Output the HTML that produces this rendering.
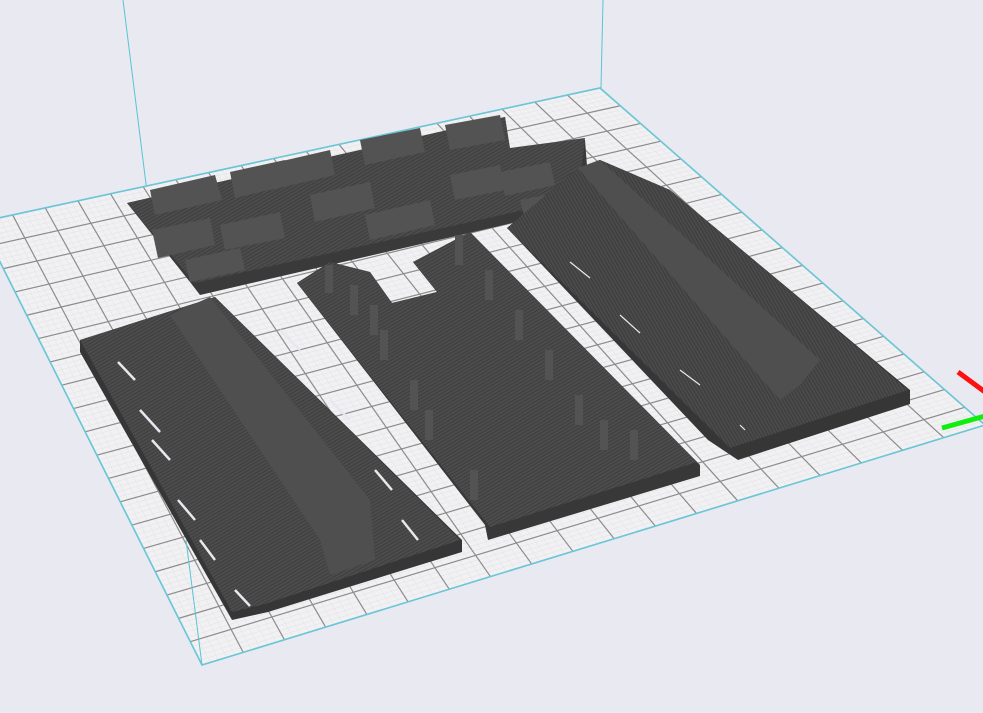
<!DOCTYPE html>
<html><head><style>
html,body{margin:0;padding:0;background:#e9e9f1;width:983px;height:713px;overflow:hidden}
svg{display:block}
</style></head><body>
<svg id="s" width="983" height="713" viewBox="0 0 983 713" xmlns="http://www.w3.org/2000/svg">
<defs>
<pattern id="st" width="3" height="3" patternUnits="userSpaceOnUse" patternTransform="rotate(60)">
<rect width="3" height="3" fill="#4c4c4c"/><rect width="1" height="3" fill="#3e3e3e"/>
</pattern>
<pattern id="st2" width="3" height="3" patternUnits="userSpaceOnUse" patternTransform="rotate(-30)">
<rect width="3" height="3" fill="#4a4a4a"/><rect width="1" height="3" fill="#3c3c3c"/>
</pattern>
</defs>
<rect width="983" height="713" fill="#e9e9f1"/>
<line x1="123" y1="0" x2="163" y2="320" stroke="#5cc3d6" stroke-width="1"/>
<line x1="603" y1="0" x2="601" y2="88" stroke="#5cc3d6" stroke-width="1"/>
<polygon points="-20,222 600,88 985,425 202,665" fill="#f1f1f3" stroke="#6cc6d6" stroke-width="1.5"/>
<g id="fine" stroke="#e2e2e6" stroke-width="0.5"></g>
<g id="grid" stroke="#8c8c8c" stroke-width="1.2"></g>
<polygon points="-20,222 600,88 985,425 202,665" fill="none" stroke="#6cc6d6" stroke-width="1.5"/>
<line x1="202" y1="665" x2="186" y2="540" stroke="#5cc3d6" stroke-width="1"/>

<!-- top strip -->
<polygon points="127,203 505,117 510,150 585,140 590,205 200,295 190,282" fill="#3a3a3a"/>
<polygon points="127,203 505,117 510,148 585,138 578,198 195,283" fill="url(#st)"/>
<g fill="#535353">
<polygon points="150,190 215,175 222,200 155,215"/><polygon points="230,172 285,160 290,185 235,198"/>
<polygon points="265,165 330,150 335,175 270,190"/><polygon points="360,140 420,128 425,152 365,165"/>
<polygon points="445,125 500,115 505,140 450,150"/><polygon points="152,230 210,218 215,245 158,258"/>
<polygon points="185,260 240,248 245,270 190,282"/><polygon points="220,225 280,212 285,238 225,250"/>
<polygon points="310,195 370,182 375,208 315,222"/><polygon points="365,215 430,200 435,225 370,240"/>
<polygon points="450,175 500,165 505,190 455,200"/><polygon points="500,172 550,162 555,185 505,196"/>
<polygon points="520,200 560,192 565,210 525,220"/>
</g>
<!-- left part -->
<polygon points="80,340 215,297 462,540 462,552 268,612 232,620 80,352" fill="#363636"/>
<polygon points="80,340 215,297 460,540 265,604 232,612" fill="url(#st)"/>
<polygon points="170,315 210,297 370,500 375,560 330,575 320,540" fill="#4f4f4f"/>
<g stroke="#e8e8ee" stroke-width="2.5">
<line x1="118" y1="362" x2="135" y2="380"/><line x1="140" y1="410" x2="160" y2="432"/>
<line x1="152" y1="440" x2="170" y2="460"/><line x1="178" y1="500" x2="195" y2="520"/>
<line x1="200" y1="540" x2="215" y2="560"/><line x1="235" y1="590" x2="250" y2="606"/>
<line x1="280" y1="330" x2="300" y2="350"/><line x1="330" y1="400" x2="350" y2="420"/>
<line x1="375" y1="470" x2="392" y2="490"/><line x1="402" y1="520" x2="418" y2="540"/>
</g>
<!-- middle part -->
<polygon points="297,283 330,262 370,272 392,303 437,292 413,262 470,232 700,465 700,476 488,540 485,525" fill="#383838"/>
<polygon points="297,283 330,262 370,272 392,303 437,292 413,262 470,232 697,462 490,527" fill="url(#st)"/>
<g fill="#535353">
<rect x="325" y="265" width="8" height="28"/><rect x="350" y="285" width="8" height="30"/>
<rect x="370" y="305" width="8" height="30"/><rect x="380" y="330" width="8" height="30"/>
<rect x="410" y="380" width="8" height="30"/><rect x="425" y="410" width="8" height="30"/>
<rect x="455" y="235" width="8" height="30"/><rect x="485" y="270" width="8" height="30"/>
<rect x="515" y="310" width="8" height="30"/><rect x="545" y="350" width="8" height="30"/>
<rect x="575" y="395" width="8" height="30"/><rect x="600" y="420" width="8" height="30"/>
<rect x="630" y="430" width="8" height="30"/><rect x="470" y="470" width="8" height="30"/>
</g>
<!-- right part -->
<polygon points="507,228 578,168 600,160 670,190 910,390 910,404 738,460 708,440" fill="#363636"/>
<polygon points="507,228 578,168 600,160 670,190 908,390 730,448" fill="url(#st2)"/>
<polygon points="578,168 600,160 820,360 800,385 780,400" fill="#4f4f4f"/>
<g stroke="#e8e8ee" stroke-width="1.2">
<line x1="570" y1="262" x2="590" y2="278"/><line x1="620" y1="315" x2="640" y2="333"/>
<line x1="680" y1="370" x2="700" y2="385"/><line x1="740" y1="425" x2="745" y2="430"/>
</g>
<!-- axes -->
<line x1="958" y1="372" x2="985" y2="392" stroke="#ff1010" stroke-width="5"/>
<line x1="942" y1="428" x2="985" y2="416" stroke="#10ee10" stroke-width="5"/>
</svg>
<script>
(function(){
var TL=[-20,222],TR=[600,88],BR=[985,425],BL=[202,665];
function P(u,v){var x=(1-u)*(1-v)*TL[0]+u*(1-v)*TR[0]+u*v*BR[0]+(1-u)*v*BL[0];
var y=(1-u)*(1-v)*TL[1]+u*(1-v)*TR[1]+u*v*BR[1]+(1-u)*v*BL[1];return [x,y];}
var ns="http://www.w3.org/2000/svg";
function add(g,n){var el=document.getElementById(g);
for(var i=1;i<n;i++){var t=i/n;[[P(t,0),P(t,1)],[P(0,t),P(1,t)]].forEach(function(l){
var e=document.createElementNS(ns,"line");e.setAttribute("x1",l[0][0]);e.setAttribute("y1",l[0][1]);
e.setAttribute("x2",l[1][0]);e.setAttribute("y2",l[1][1]);el.appendChild(e);});}}
add("fine",95);add("grid",19);
})();
</script>
</body></html>
